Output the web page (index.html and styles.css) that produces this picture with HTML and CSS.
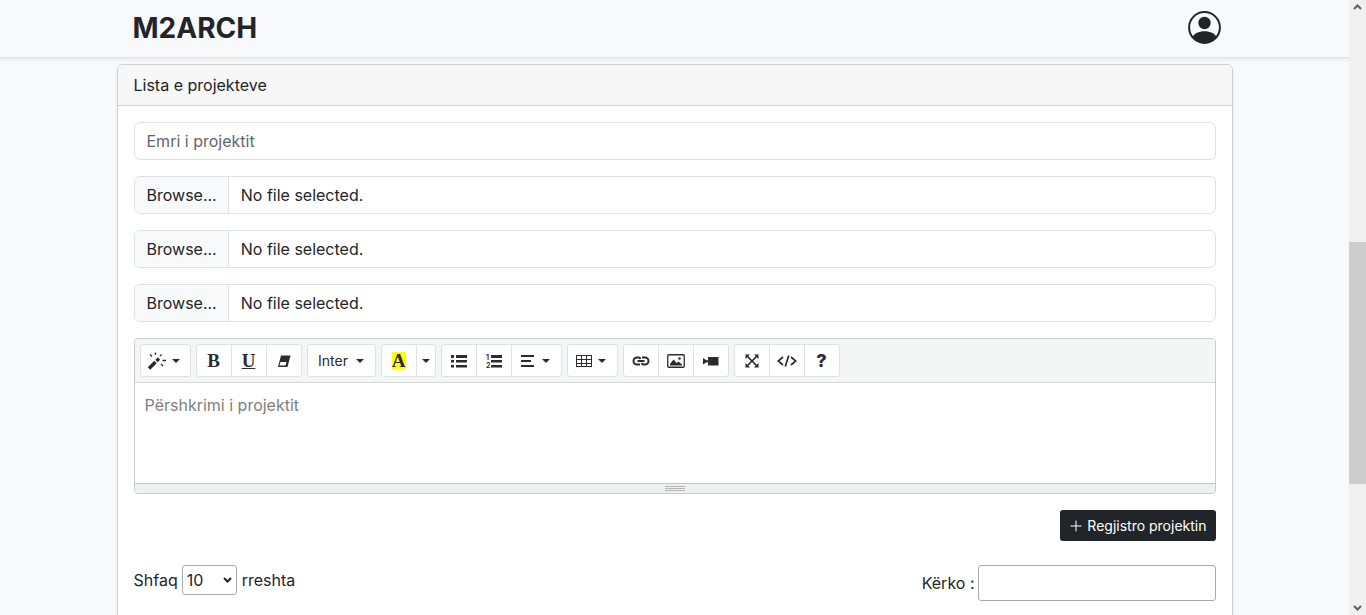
FILE: index.html
```html
<!DOCTYPE html>
<html lang="sq">
<head>
    <meta charset="UTF-8">
    <meta name="viewport" content="width=device-width, initial-scale=1.0">
    <title>M2ARCH</title>
    <link rel="stylesheet" href="styles.css">
</head>
<body>
    <header class="navbar">
        <div class="container navbar-inner">
            <a class="brand" href="#">M2ARCH</a>
            <a class="profile" href="#" aria-label="Profili">
                <svg width="33" height="33" viewBox="0 0 33 33">
                    <circle cx="16.500" cy="16.500" r="15.400" fill="none" stroke="currentColor" stroke-width="2"/>
                    <circle cx="16.500" cy="12" r="6.200" fill="currentColor"/>
                    <path d="M4.500 26C6.500 22.500 10.500 20.300 16.500 20.300S26.500 22.500 28.500 26C25.500 30.300 21.500 32 16.500 32S7.500 30.300 4.500 26z" fill="currentColor"/>
                </svg>
            </a>
        </div>
    </header>

    <main class="container">
        <section class="card">
            <div class="card-header">Lista e projekteve</div>
            <div class="card-body">
                <form class="project-form">
                    <input type="text" class="form-control" placeholder="Emri i projektit" aria-label="Emri i projektit">
                    <label class="file-control">
                        <input type="file">
                        <span class="file-button">Browse...</span>
                        <span class="file-name">No file selected.</span>
                    </label>
                    <label class="file-control">
                        <input type="file">
                        <span class="file-button">Browse...</span>
                        <span class="file-name">No file selected.</span>
                    </label>
                    <label class="file-control">
                        <input type="file">
                        <span class="file-button">Browse...</span>
                        <span class="file-name">No file selected.</span>
                    </label>

                    <div class="editor">
                        <div class="toolbar">
                            <div class="btn-group">
                                <button type="button" class="wide" aria-label="Style">
                                    <svg width="18" height="18" viewBox="0 0 18 18" stroke="currentColor" fill="none">
                                        <path d="M1 16.500L7.500 10" stroke-width="3.600"/>
                                        <path d="M8.500 9L11 6.500" stroke-width="3.200"/>
                                        <path d="M7.500 0.500V3M2 2.500L4 4.500M13.500 2.500L12 4M14.500 8.500H18M13 12L15 14" stroke-width="1.300"/>
                                    </svg>
                                    <span class="caret"></span>
                                </button>
                            </div>
                            <div class="btn-group">
                                <button type="button" class="serif" aria-label="Bold">B</button>
                                <button type="button" class="serif underline" aria-label="Underline">U</button>
                                <button type="button" aria-label="Remove font style">
                                    <svg width="14" height="14" viewBox="0 0 14 14">
                                        <path d="M4 1.500H13.500L10.500 13H1z" fill="currentColor"/>
                                        <path d="M3.500 8H9.500L8.500 11.500H2.500z" fill="#fff"/>
                                    </svg>
                                </button>
                            </div>
                            <div class="btn-group">
                                <button type="button" class="font-name">Inter <span class="caret"></span></button>
                            </div>
                            <div class="btn-group">
                                <button type="button" class="serif" aria-label="Recent color"><span class="highlight">A</span></button>
                                <button type="button" class="narrow" aria-label="More color"><span class="caret"></span></button>
                            </div>
                            <div class="btn-group">
                                <button type="button" aria-label="Unordered list">
                                    <svg width="16" height="14" viewBox="0 0 16 14" fill="currentColor">
                                        <path d="M5 1H16V4H5zM5 6H16V8.500H5zM5 11H16V13.500H5z"/>
                                        <path d="M0 1H3V4H0zM0 6H3V8.500H0zM0 11H3V13.500H0z"/>
                                    </svg>
                                </button>
                                <button type="button" aria-label="Ordered list">
                                    <svg width="16" height="16" viewBox="0 0 16 16" fill="currentColor">
                                        <path d="M5 2H16V5H5zM5 7H16V9.500H5zM5 12H16V14.500H5z"/>
                                        <text class="list-num" x="0" y="7">1</text>
                                        <text class="list-num" x="0" y="15">2</text>
                                    </svg>
                                </button>
                                <button type="button" class="wide" aria-label="Paragraph">
                                    <svg width="16" height="14" viewBox="0 0 16 14" fill="currentColor">
                                        <path d="M1 1H14V3H1zM1 6H11V8H1zM1 11H14V13H1z"/>
                                    </svg>
                                    <span class="caret"></span>
                                </button>
                            </div>
                            <div class="btn-group">
                                <button type="button" class="wide" aria-label="Table">
                                    <svg width="16" height="14" viewBox="0 0 16 14" fill="none" stroke="currentColor">
                                        <path d="M0.500 1V13M5.500 1V13M10.500 1V13M15.500 1V13M0 1.500H16M0 5.500H16M0 9.500H16M0 12.500H16"/>
                                    </svg>
                                    <span class="caret"></span>
                                </button>
                            </div>
                            <div class="btn-group">
                                <button type="button" aria-label="Link">
                                    <svg width="18" height="14" viewBox="0 0 18 14" fill="none" stroke="currentColor" stroke-width="2">
                                        <path d="M8 10.500H5A3.500 3.500 0 0 1 5 3.500H6.500Q8 3.500 8.300 5M10 3.500H13A3.500 3.500 0 0 1 13 10.500H11.500Q10 10.500 9.700 9M5.500 7H12.500"/>
                                    </svg>
                                </button>
                                <button type="button" aria-label="Picture">
                                    <svg width="18" height="14" viewBox="0 0 18 14">
                                        <rect x="0.750" y="0.750" width="16.500" height="12.500" rx="1" fill="none" stroke="currentColor" stroke-width="1.300"/>
                                        <path d="M3 11.500V10L6.500 5.500L9.500 9L11.500 7.500L15 10.500V11.500z" fill="currentColor"/>
                                        <circle cx="12.500" cy="4.500" r="1.300" fill="currentColor"/>
                                    </svg>
                                </button>
                                <button type="button" aria-label="Video">
                                    <svg width="16" height="14" viewBox="0 0 16 14" fill="currentColor">
                                        <path d="M5 3H15.500V11.500H5zM0 4L3.500 6.200H5V8.300H3.500L0 10.500z"/>
                                    </svg>
                                </button>
                            </div>
                            <div class="btn-group">
                                <button type="button" aria-label="Full screen">
                                    <svg width="14" height="14" viewBox="0 0 14 14">
                                        <path d="M2.500 2.500L11.500 11.500M11.500 2.500L2.500 11.500" stroke="currentColor" stroke-width="1.700"/>
                                        <path d="M0.500 0.500H5L0.500 5zM13.500 0.500V5L9 0.500zM0.500 13.500V9L5 13.500zM13.500 13.500H9L13.500 9z" fill="currentColor"/>
                                    </svg>
                                </button>
                                <button type="button" aria-label="Code view">
                                    <svg width="20" height="14" viewBox="0 0 20 14" fill="none" stroke="currentColor" stroke-width="1.700">
                                        <path d="M6 3L1.200 7L6 11M14 3L18.800 7L14 11M11.700 1.500L8.300 12.500"/>
                                    </svg>
                                </button>
                                <button type="button" class="help" aria-label="Help">?</button>
                            </div>
                        </div>
                        <textarea class="editor-area" placeholder="Përshkrimi i projektit" aria-label="Përshkrimi i projektit"></textarea>
                        <div class="statusbar"><span></span><span></span><span></span></div>
                    </div>

                    <button type="submit" class="btn-dark">
                        <svg width="12" height="12" viewBox="0 0 12 12" stroke="currentColor">
                            <path d="M6 0.500V11.500M0.500 6H11.500"/>
                        </svg>
                        Regjistro projektin
                    </button>
                </form>

                <div class="table-controls">
                    <label class="length">Shfaq
                        <span class="select-wrap">
                            <select>
                                <option selected>10</option>
                                <option>25</option>
                                <option>50</option>
                                <option>100</option>
                            </select>
                            <svg width="9" height="6" viewBox="0 0 9 6"><path d="M1 1L4.500 4.500L8 1"/></svg>
                        </span>
                        rreshta
                    </label>
                    <label class="search">Kërko :
                        <input type="search">
                    </label>
                </div>
            </div>
        </section>
    </main>

    <div class="scrollbar" aria-hidden="true">
        <svg width="9" height="6" viewBox="0 0 9 6"><path d="M1 5L4.500 1.500L8 5"/></svg>
        <div class="scroll-track"><div class="scroll-thumb"></div></div>
        <svg width="9" height="6" viewBox="0 0 9 6"><path d="M1 1L4.500 4.500L8 1"/></svg>
    </div>
</body>
</html>
```
FILE: styles.css
```css
* {
    box-sizing: border-box;
}

body {
    margin: 0;
    padding-right: 17px;
    font-family: Inter, "Liberation Sans", sans-serif;
    font-size: 16px;
    line-height: 24px;
    color: #212529;
    background-color: #f8f9fb;
    overflow: hidden;
}

button, input, select, textarea {
    font: inherit;
    color: inherit;
}

.container {
    width: 100%;
    max-width: 1140px;
    margin: 0 auto;
    padding: 0 12px;
}

/* Top bar */
.navbar {
    background-color: #f8f9fb;
    border-bottom: 1px solid #dee2e6;
    box-shadow: 0 2px 4px rgba(0, 0, 0, 0.06);
    margin-right: -17px;
    padding-right: 17px;
}

.navbar-inner {
    display: flex;
    justify-content: space-between;
    align-items: center;
    height: 57px;
    padding: 0 24px 2px 28px;
}

.brand {
    font-size: 28px;
    font-weight: 700;
    color: #212529;
    text-decoration: none;
}

.profile {
    display: flex;
    color: #212529;
}

/* Card */
.card {
    margin-top: 6px;
    background-color: #fff;
    border: 1px solid #cfd0d1;
    border-radius: 6px;
    box-shadow: 0 2px 4px rgba(0, 0, 0, 0.07);
}

.card-header {
    padding: 8px 16px;
    background-color: #f7f7f7;
    border-bottom: 1px solid #cfd0d1;
    border-radius: 5px 5px 0 0;
}

.card-body {
    padding: 16px;
}

.project-form {
    display: flex;
    flex-direction: column;
    gap: 16px;
}

.form-control, .file-control {
    width: 100%;
    height: 38px;
    background-color: #fff;
    border: 1px solid #dee2e6;
    border-radius: 6px;
}

.form-control {
    padding: 6px 12px;
}

.form-control::placeholder {
    color: #5f666d;
    opacity: 1;
}

.file-control {
    position: relative;
    display: flex;
    overflow: hidden;
}

.file-control input {
    position: absolute;
    inset: 0;
    opacity: 0;
}

.file-button {
    padding: 6px 11px 6px 12px;
    background-color: #f8f9fb;
    border-right: 1px solid #dee2e6;
}

.file-name {
    padding: 6px 12px;
}

/* Text editor */
.editor {
    border: 1px solid #c9cbcc;
    border-radius: 4px;
    overflow: hidden;
}

.toolbar {
    display: flex;
    flex-wrap: wrap;
    gap: 5px;
    padding: 5px;
    background-color: #f4f5f5;
    border-bottom: 1px solid #d5d7d8;
}

.btn-group {
    display: flex;
}

.btn-group button {
    display: flex;
    justify-content: center;
    align-items: center;
    width: 36px;
    height: 33px;
    padding: 0;
    font-size: 14px;
    color: #2b2b30;
    background-color: #fff;
    border: 1px solid #dee2e6;
}

.btn-group button + button {
    margin-left: -1px;
}

.btn-group button:first-child {
    border-radius: 3px 0 0 3px;
}

.btn-group button:last-child {
    border-radius: 0 3px 3px 0;
}

.btn-group button:only-child {
    border-radius: 3px;
}

.btn-group .wide {
    width: 51px;
    gap: 6px;
    padding-right: 2px;
}

.btn-group .narrow {
    width: 20px;
}

.btn-group .font-name {
    width: 69px;
    gap: 8px;
}

.btn-group .serif {
    font-family: "Liberation Serif", serif;
    font-size: 19px;
    font-weight: 700;
}

.btn-group .underline {
    text-decoration: underline;
}

.btn-group .help {
    font-size: 18px;
    font-weight: 800;
}

.highlight {
    width: 14px;
    line-height: 17px;
    background-color: #ff0;
}

.list-num {
    font-size: 7px;
    font-weight: 700;
}

.caret {
    border-top: 4px solid currentColor;
    border-left: 4px solid transparent;
    border-right: 4px solid transparent;
}

.editor-area {
    display: block;
    width: 100%;
    height: 100px;
    padding: 10px;
    border: 0;
    outline: 0;
    resize: none;
}

.editor-area::placeholder {
    color: #808080;
    opacity: 1;
}

.statusbar {
    display: flex;
    flex-direction: column;
    align-items: center;
    gap: 1px;
    height: 10px;
    padding-top: 2px;
    background-color: #eff0f0;
    border-top: 1px solid #c4c6c6;
}

.statusbar span {
    width: 20px;
    height: 1px;
    background-color: #b5b5b5;
}

.btn-dark {
    display: flex;
    align-items: center;
    align-self: flex-end;
    gap: 5px;
    height: 31px;
    padding: 0 9px 0 10px;
    font-size: 14px;
    color: #fff;
    background-color: #212529;
    border: 0;
    border-radius: 3px;
}

/* Table length and search */
.table-controls {
    display: flex;
    justify-content: space-between;
    align-items: flex-start;
    margin-top: 24px;
    padding-bottom: 16px;
}

.length, .search {
    display: flex;
    align-items: center;
    gap: 4px;
}

.select-wrap {
    position: relative;
    display: flex;
    margin-right: 1px;
}

.select-wrap select {
    appearance: none;
    width: 55px;
    height: 30px;
    padding: 0 4px;
    background-color: #fff;
    border: 1px solid #aaa;
    border-radius: 3px;
}

.select-wrap svg {
    position: absolute;
    top: 12px;
    right: 5px;
    fill: none;
    stroke: #212529;
    stroke-width: 2;
    pointer-events: none;
}

.search {
    gap: 3px;
}

.search input {
    width: 238px;
    height: 36px;
    padding: 5px;
    border: 1px solid #aaa;
    border-radius: 3px;
}

/* Scrollbar */
.scrollbar {
    position: fixed;
    top: 0;
    right: 0;
    bottom: 0;
    display: flex;
    flex-direction: column;
    align-items: center;
    gap: 6px;
    width: 17px;
    padding: 4px 0;
    background-color: #f0f0f0;
}

.scrollbar svg {
    fill: none;
    stroke: #606060;
    stroke-width: 2;
}

.scroll-track {
    display: flex;
    flex: 1;
    flex-direction: column;
    width: 100%;
    padding-top: 226px;
}

.scroll-thumb {
    height: 242px;
    background-color: #cdcdcd;
}
```
